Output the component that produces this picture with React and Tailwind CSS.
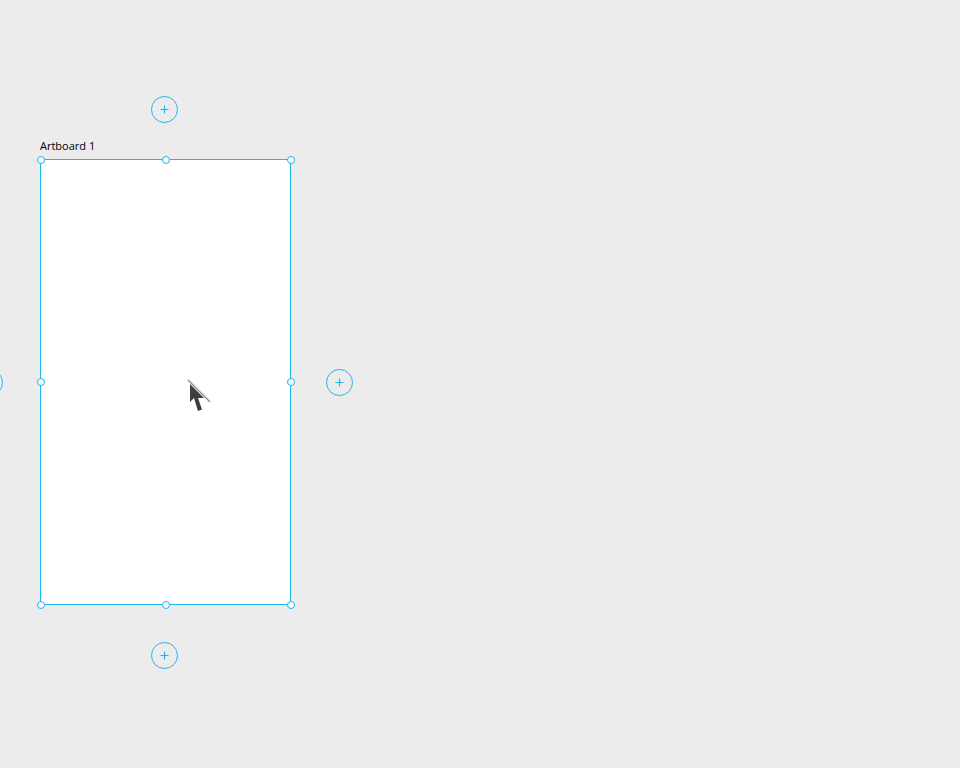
import React from 'react'

const BLUE = '#1cb7f0'

function Handle({ className }) {
  return (
    <div
      className={`absolute w-[8px] h-[8px] rounded-full bg-white border border-[#1cb7f0] ${className}`}
    />
  )
}

function AddButton({ className = '' }) {
  return (
    <div
      className={`shrink-0 w-[27px] h-[27px] rounded-full border border-[#1cb7f0] flex items-center justify-center ${className}`}
    >
      <svg width="9" height="9" viewBox="0 0 9 9">
        <path d="M4.5 0.5v8M0.5 4.5h8" stroke={BLUE} strokeWidth="1.2" />
      </svg>
    </div>
  )
}

function Cursor() {
  return (
    <svg className="absolute left-[143px] top-[216px]" width="30" height="40" viewBox="0 0 30 40">
      <path d="M4 4 L26 26" stroke="#8a8a8a" strokeWidth="1.2" />
      <path d="M5 3.5 L27 25.5" stroke="#d6d6d6" strokeWidth="1" />
      <path d="M6 8 L6 26 L10 22 L14 35 L18 33.5 L14 22 L20 22 Z" fill="#3e3e3e" />
    </svg>
  )
}

export default function App() {
  return (
    <div className="w-[960px] h-[768px] bg-[#ececec] overflow-hidden pt-[96px] font-['Open_Sans',sans-serif]">
      <div className="flex items-center -ml-[24px]">
        <AddButton />

        <div className="flex flex-col ml-[37px] w-[251px]">
          <AddButton className="ml-[111px]" />
          <div className="mt-[17px] text-[11px] leading-[11px] text-black">Artboard 1</div>
          <div className="relative mt-[8px] h-[446px] bg-white border border-[#1cb7f0]">
            <Handle className="-left-[4.5px] -top-[4.5px]" />
            <Handle className="left-1/2 -translate-x-1/2 -top-[4.5px]" />
            <Handle className="-right-[4.5px] -top-[4.5px]" />
            <Handle className="-left-[4.5px] top-1/2 -translate-y-1/2" />
            <Handle className="-right-[4.5px] top-1/2 -translate-y-1/2" />
            <Handle className="-left-[4.5px] -bottom-[4.5px]" />
            <Handle className="left-1/2 -translate-x-1/2 -bottom-[4.5px]" />
            <Handle className="-right-[4.5px] -bottom-[4.5px]" />
            <Cursor />
          </div>
          <AddButton className="ml-[111px] mt-[37px]" />
        </div>

        <AddButton className="ml-[35px]" />
      </div>
    </div>
  )
}
